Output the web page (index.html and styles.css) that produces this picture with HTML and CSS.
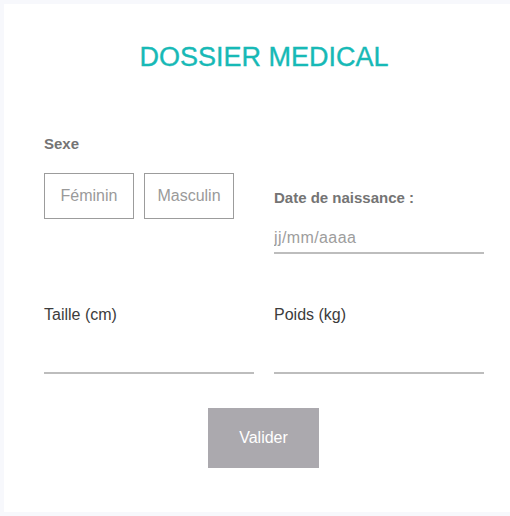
FILE: index.html
```html
<!DOCTYPE html>
<html lang="fr">
<head>
<meta charset="utf-8">
<title>Dossier médical</title>
<link rel="stylesheet" href="styles.css">
</head>
<body>
<main class="card">
  <h1 class="title">DOSSIER MEDICAL</h1>
  <form class="form">
    <div class="row row-top">
      <div class="field">
        <span class="label label-strong">Sexe</span>
        <div class="choices">
          <button type="button" class="choice">Féminin</button>
          <button type="button" class="choice">Masculin</button>
        </div>
      </div>
      <div class="field field-date">
        <label class="label label-strong" for="dob">Date de naissance :</label>
        <input id="dob" class="input input-date" type="text" placeholder="jj/mm/aaaa">
      </div>
    </div>
    <div class="row row-measures">
      <div class="field">
        <label class="label label-light" for="taille">Taille (cm)</label>
        <input id="taille" class="input input-measure" type="text">
      </div>
      <div class="field">
        <label class="label label-light" for="poids">Poids (kg)</label>
        <input id="poids" class="input input-measure" type="text">
      </div>
    </div>
    <div class="actions">
      <button type="submit" class="submit">Valider</button>
    </div>
  </form>
</main>
</body>
</html>
```
FILE: styles.css
```css
html, body {
  margin: 0;
  padding: 0;
}
body {
  background: #f7f8fc;
  padding: 4px 0 4px 4px;
  font-family: "Liberation Sans", Arial, sans-serif;
  overflow: hidden;
}
.card {
  box-sizing: border-box;
  width: 506px;
  height: 508px;
  background: #ffffff;
  padding: 37px 26px 0 40px;
}
.title {
  margin: 0;
  font-size: 27px;
  line-height: 32px;
  font-weight: 400;
  color: #17b9b6;
  -webkit-text-stroke: 0.35px #17b9b6;
  text-align: center;
}
.form {
  margin-top: 61px;
  display: flex;
  flex-direction: column;
}
.row {
  display: grid;
  grid-template-columns: 210px 210px;
  column-gap: 20px;
  align-items: start;
}
.field {
  display: flex;
  flex-direction: column;
}
.label {
  display: block;
  line-height: 20px;
}
.label-strong {
  font-size: 15px;
  font-weight: 700;
  color: #747474;
}
.label-light {
  font-size: 16px;
  font-weight: 400;
  color: #3c3c3c;
}
.choices {
  display: flex;
  gap: 10px;
  margin-top: 19px;
}
.choice {
  box-sizing: border-box;
  width: 90px;
  height: 46px;
  background: #ffffff;
  border: 1px solid #9c9c9c;
  border-radius: 0;
  padding: 0;
  font-family: inherit;
  font-size: 16px;
  color: #9a9a9a;
}
.field-date {
  padding-top: 54px;
}
.input {
  box-sizing: border-box;
  width: 210px;
  height: 30px;
  border: none;
  border-bottom: 2px solid #bdbdbd;
  padding: 0;
  font-family: inherit;
  font-size: 16px;
  color: #333;
  background: transparent;
  outline: none;
}
.input::placeholder {
  color: #9d9d9d;
  letter-spacing: 0.4px;
}
.input-date {
  margin-top: 16px;
}
.row-measures {
  margin-top: 51px;
}
.input-measure {
  margin-top: 19px;
}
.actions {
  display: flex;
  justify-content: center;
  margin-top: 34px;
}
.submit {
  width: 111px;
  height: 60px;
  margin-left: -1px;
  border: none;
  border-radius: 0;
  background: #aba9ae;
  color: #ffffff;
  font-family: inherit;
  font-size: 16px;
}
```
